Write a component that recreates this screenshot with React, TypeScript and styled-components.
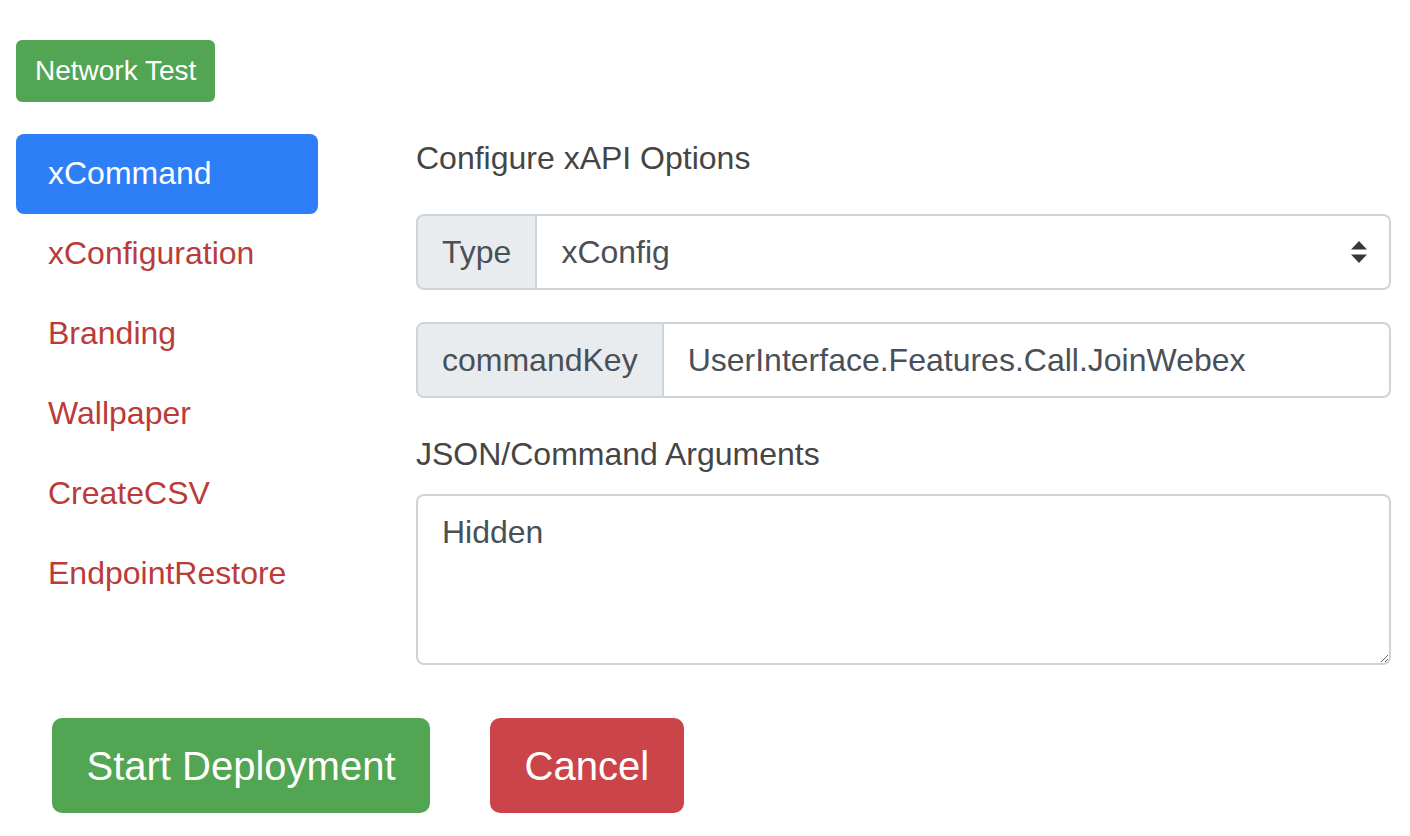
import React from "react";
import styled, { createGlobalStyle } from "styled-components";

const Global = createGlobalStyle`
  html, body { margin: 0; padding: 0; background: #fff; }
  body { font-family: "Liberation Sans", Arial, Helvetica, sans-serif; color: #212529; }
  * { box-sizing: border-box; }
`;

const Page = styled.div`
  padding: 40px 19px 0 16px;
`;

const SmallButton = styled.button`
  display: inline-block;
  font-family: inherit;
  font-size: 28px;
  line-height: 40px;
  padding: 9px 17px;
  color: #fff;
  background: #52a552;
  border: 2px solid #52a552;
  border-radius: 6px;
  cursor: pointer;
`;

const TopBar = styled.div`
  margin-bottom: 32px;
`;

const Main = styled.div`
  display: grid;
  grid-template-columns: 302px 1fr;
  column-gap: 98px;
  align-items: start;
`;

const Nav = styled.nav`
  display: flex;
  flex-direction: column;
`;

const NavLink = styled.a<{ $active?: boolean }>`
  display: block;
  font-size: 32px;
  line-height: 48px;
  padding: 15px 32px 17px;
  border-radius: 8px;
  text-decoration: none;
  color: ${(p) => (p.$active ? "#fff" : "#bb3b38")};
  background: ${(p) => (p.$active ? "#2e7ef7" : "transparent")};
`;

const Content = styled.div`
  display: flex;
  flex-direction: column;
`;

const Heading = styled.div`
  font-size: 32px;
  line-height: 48px;
  color: #454545;
  margin-bottom: 32px;
`;

const Label = styled.label`
  font-size: 32px;
  line-height: 48px;
  color: #454545;
  margin-bottom: 16px;
`;

const InputGroup = styled.div`
  display: flex;
  height: 76px;
  margin-bottom: 32px;
`;

const Addon = styled.span`
  display: flex;
  align-items: center;
  padding: 0 24px;
  font-size: 32px;
  color: #495057;
  background: #e9ecef;
  border: 2px solid #ced4da;
  border-radius: 8px 0 0 8px;
`;

const SelectWrap = styled.div`
  position: relative;
  flex: 1;
  display: flex;
`;

const Select = styled.select`
  flex: 1;
  appearance: none;
  -webkit-appearance: none;
  font-family: inherit;
  font-size: 32px;
  color: #495057;
  background: #fff;
  border: 2px solid #ced4da;
  border-left: none;
  border-radius: 0 8px 8px 0;
  padding: 0 60px 0 24px;
  outline: none;
`;

const Arrows = styled.svg`
  position: absolute;
  right: 24px;
  top: 50%;
  transform: translateY(-50%);
  pointer-events: none;
`;

const TextInput = styled.input`
  flex: 1;
  min-width: 0;
  font-family: inherit;
  font-size: 32px;
  color: #495057;
  background: #fff;
  border: 2px solid #ced4da;
  border-left: none;
  border-radius: 0 8px 8px 0;
  padding: 0 24px;
  outline: none;
`;

const TextArea = styled.textarea`
  height: 171px;
  font-family: inherit;
  font-size: 32px;
  line-height: 48px;
  color: #495057;
  background: #fff;
  border: 2px solid #ced4da;
  border-radius: 8px;
  padding: 12px 24px;
  outline: none;
`;

const Footer = styled.div`
  display: flex;
  gap: 60px;
  margin-top: 53px;
  padding-left: 36px;
`;

const BigButton = styled.button<{ $variant: "success" | "danger" }>`
  font-family: inherit;
  font-size: 40px;
  line-height: 60px;
  padding: 15.5px 32.5px;
  color: #fff;
  background: ${(p) => (p.$variant === "success" ? "#52a552" : "#cb444a")};
  border: 2px solid ${(p) => (p.$variant === "success" ? "#52a552" : "#cb444a")};
  border-radius: 10px;
  cursor: pointer;
`;

const navItems = [
  "xCommand",
  "xConfiguration",
  "Branding",
  "Wallpaper",
  "CreateCSV",
  "EndpointRestore",
];

export default function App() {
  return (
    <Page>
      <Global />
      <TopBar>
        <SmallButton>Network Test</SmallButton>
      </TopBar>
      <Main>
        <Nav>
          {navItems.map((n, i) => (
            <NavLink key={n} href="#" $active={i === 0}>
              {n}
            </NavLink>
          ))}
        </Nav>
        <Content>
          <Heading>Configure xAPI Options</Heading>
          <InputGroup>
            <Addon>Type</Addon>
            <SelectWrap>
              <Select defaultValue="xConfig">
                <option value="xCommand">xCommand</option>
                <option value="xConfig">xConfig</option>
              </Select>
              <Arrows width="16" height="22" viewBox="0 0 16 22">
                <path d="M8 0 L16 8.5 L0 8.5 Z" fill="#343a40" />
                <path d="M0 13.5 L16 13.5 L8 22 Z" fill="#343a40" />
              </Arrows>
            </SelectWrap>
          </InputGroup>
          <InputGroup>
            <Addon>commandKey</Addon>
            <TextInput readOnly value="UserInterface.Features.Call.JoinWebex" />
          </InputGroup>
          <Label>JSON/Command Arguments</Label>
          <TextArea readOnly value="Hidden" />
        </Content>
      </Main>
      <Footer>
        <BigButton $variant="success">Start Deployment</BigButton>
        <BigButton $variant="danger">Cancel</BigButton>
      </Footer>
    </Page>
  );
}
